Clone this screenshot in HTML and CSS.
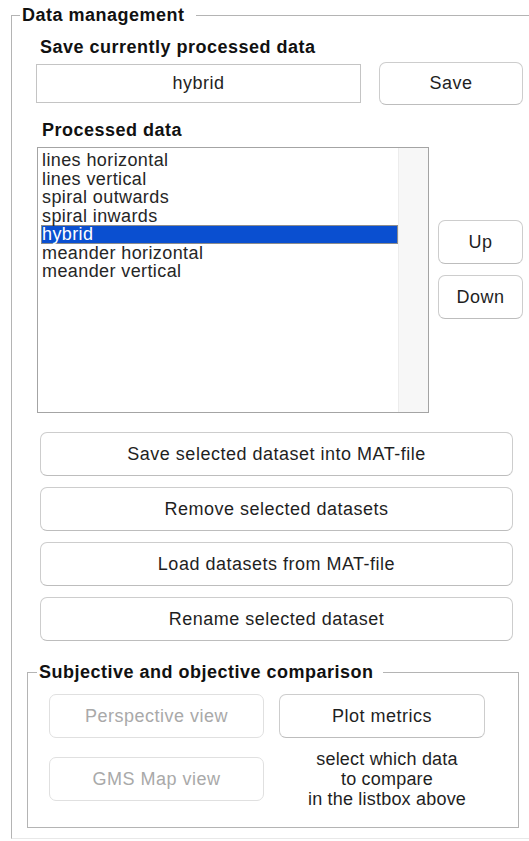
FILE: index.html
```html
<!DOCTYPE html>
<html lang="en">
<head>
<meta charset="utf-8">
<title>Data management</title>
<link rel="stylesheet" href="styles.css">
</head>
<body>
<fieldset class="panel panel-main">
  <legend class="panel-title">Data management</legend>

  <div class="label label-save">Save currently processed data</div>
  <div class="save-row">
    <div class="edit">hybrid</div>
    <button class="btn btn-save" type="button">Save</button>
  </div>

  <div class="label label-list">Processed data</div>
  <div class="list-row">
    <div class="listbox">
      <ul class="items">
        <li>lines horizontal</li>
        <li>lines vertical</li>
        <li>spiral outwards</li>
        <li>spiral inwards</li>
        <li class="selected">hybrid</li>
        <li>meander horizontal</li>
        <li>meander vertical</li>
      </ul>
      <div class="scroll-track"></div>
    </div>
    <div class="order">
      <button class="btn btn-order" type="button">Up</button>
      <button class="btn btn-order" type="button">Down</button>
    </div>
  </div>

  <div class="actions">
    <button class="btn btn-wide" type="button">Save selected dataset into MAT-file</button>
    <button class="btn btn-wide" type="button">Remove selected datasets</button>
    <button class="btn btn-wide" type="button">Load datasets from MAT-file</button>
    <button class="btn btn-wide" type="button">Rename selected dataset</button>
  </div>

  <fieldset class="panel panel-compare">
    <legend class="panel-title panel-title-sub">Subjective and objective comparison</legend>
    <div class="compare-grid">
      <button class="btn" type="button" disabled>Perspective view</button>
      <button class="btn" type="button">Plot metrics</button>
      <button class="btn" type="button" disabled>GMS Map view</button>
      <p class="hint">select which data<br>to compare<br>in the listbox above</p>
    </div>
  </fieldset>
</fieldset>
</body>
</html>
```

FILE: styles.css
```css
html, body {
  margin: 0;
  padding: 0;
  background: #ffffff;
}

body {
  width: 529px;
  height: 841px;
  overflow: hidden;
  font-family: "Liberation Sans", Arial, sans-serif;
  color: #1f1f1f;
}

/* framed groups */
.panel {
  margin: 0;
  padding: 0;
  min-width: 0;
  border: 1px solid #b4b4b4;
}

.panel-main {
  box-sizing: border-box;
  margin: 5px 0 0 11px;
  width: 518px;
  border-right: 0;
  border-bottom-color: #e8e8e8;
  padding-bottom: 10px;
}

.panel-title {
  margin-left: 8px;
  padding: 0 11px 0 2px;
  font-size: 18px;
  line-height: 20px;
  font-weight: bold;
  letter-spacing: 0.5px;
  color: #111;
}

/* legend sits at the padding edge, so pull it back over the inner padding */
.panel-title-sub {
  margin-left: -12px;
  padding: 0 9px 0 2px;
  line-height: 22px;
}

.label {
  font-size: 18px;
  line-height: 22px;
  font-weight: bold;
  letter-spacing: 0.5px;
  color: #111;
}

.label-save {
  margin: 11px 0 0 28px;
}

.label-list {
  margin: 14px 0 0 30px;
}

/* edit field + save */
.save-row {
  display: flex;
  align-items: center;
  gap: 18px;
  margin: 4px 0 0 24px;
}

.edit {
  box-sizing: border-box;
  width: 325px;
  height: 39px;
  border: 1px solid #c4c4c4;
  font-size: 18px;
  letter-spacing: 0.5px;
  line-height: 37px;
  text-align: center;
  color: #1f1f1f;
}

/* push buttons */
.btn {
  box-sizing: border-box;
  height: 44px;
  margin: 0;
  padding: 0;
  background: #ffffff;
  border: 1px solid #cdcdcd;
  border-bottom-color: #bdbdbd;
  border-radius: 7px;
  font-family: "Liberation Sans", Arial, sans-serif;
  font-size: 18px;
  letter-spacing: 0.5px;
  color: #1f1f1f;
}

.btn:disabled {
  color: #a9a9a9;
  border-color: #e0e0e0;
}

.btn-save {
  width: 144px;
  height: 43px;
}

/* list box */
.list-row {
  display: flex;
  gap: 9px;
  margin: 6px 0 0 25px;
}

.listbox {
  box-sizing: border-box;
  width: 392px;
  height: 266px;
  border: 1px solid #a4a4a4;
  display: flex;
  padding: 2px 0 2px 3px;
}

.items {
  flex: 1;
  margin: 0;
  padding: 1px 0 0;
  list-style: none;
  font-size: 18px;
  line-height: 18.5px;
  letter-spacing: 0.4px;
  color: #262626;
}

.items li {
  padding-left: 1px;
  white-space: nowrap;
}

.items .selected {
  background: #0a4fd0;
  color: #ffffff;
  box-shadow: 0 0 0 1px #8c8c8c inset;
}

.scroll-track {
  width: 29px;
  margin: -2px 0 -2px 0;
  background: #f7f7f7;
  border-left: 1px solid #ececec;
}

.order {
  display: flex;
  flex-direction: column;
  gap: 11px;
  margin-top: 73px;
}

.btn-order {
  width: 85px;
}

/* action buttons */
.actions {
  display: flex;
  flex-direction: column;
  gap: 11px;
  margin: 19px 0 0 28px;
}

.btn-wide {
  width: 473px;
}

/* comparison group */
.panel-compare {
  margin: 20px 0 0 15px;
  width: 492px;
  box-sizing: border-box;
  padding: 0 0 26px 21px;
}

.compare-grid {
  display: grid;
  grid-template-columns: 215px 206px;
  grid-template-rows: 44px 44px;
  column-gap: 15px;
  row-gap: 19px;
  margin-top: 11px;
}

.hint {
  margin: 0;
  padding-left: 10px;
  align-self: center;
  font-size: 18px;
  line-height: 20px;
  letter-spacing: 0.2px;
  text-align: center;
  color: #1f1f1f;
}
```
